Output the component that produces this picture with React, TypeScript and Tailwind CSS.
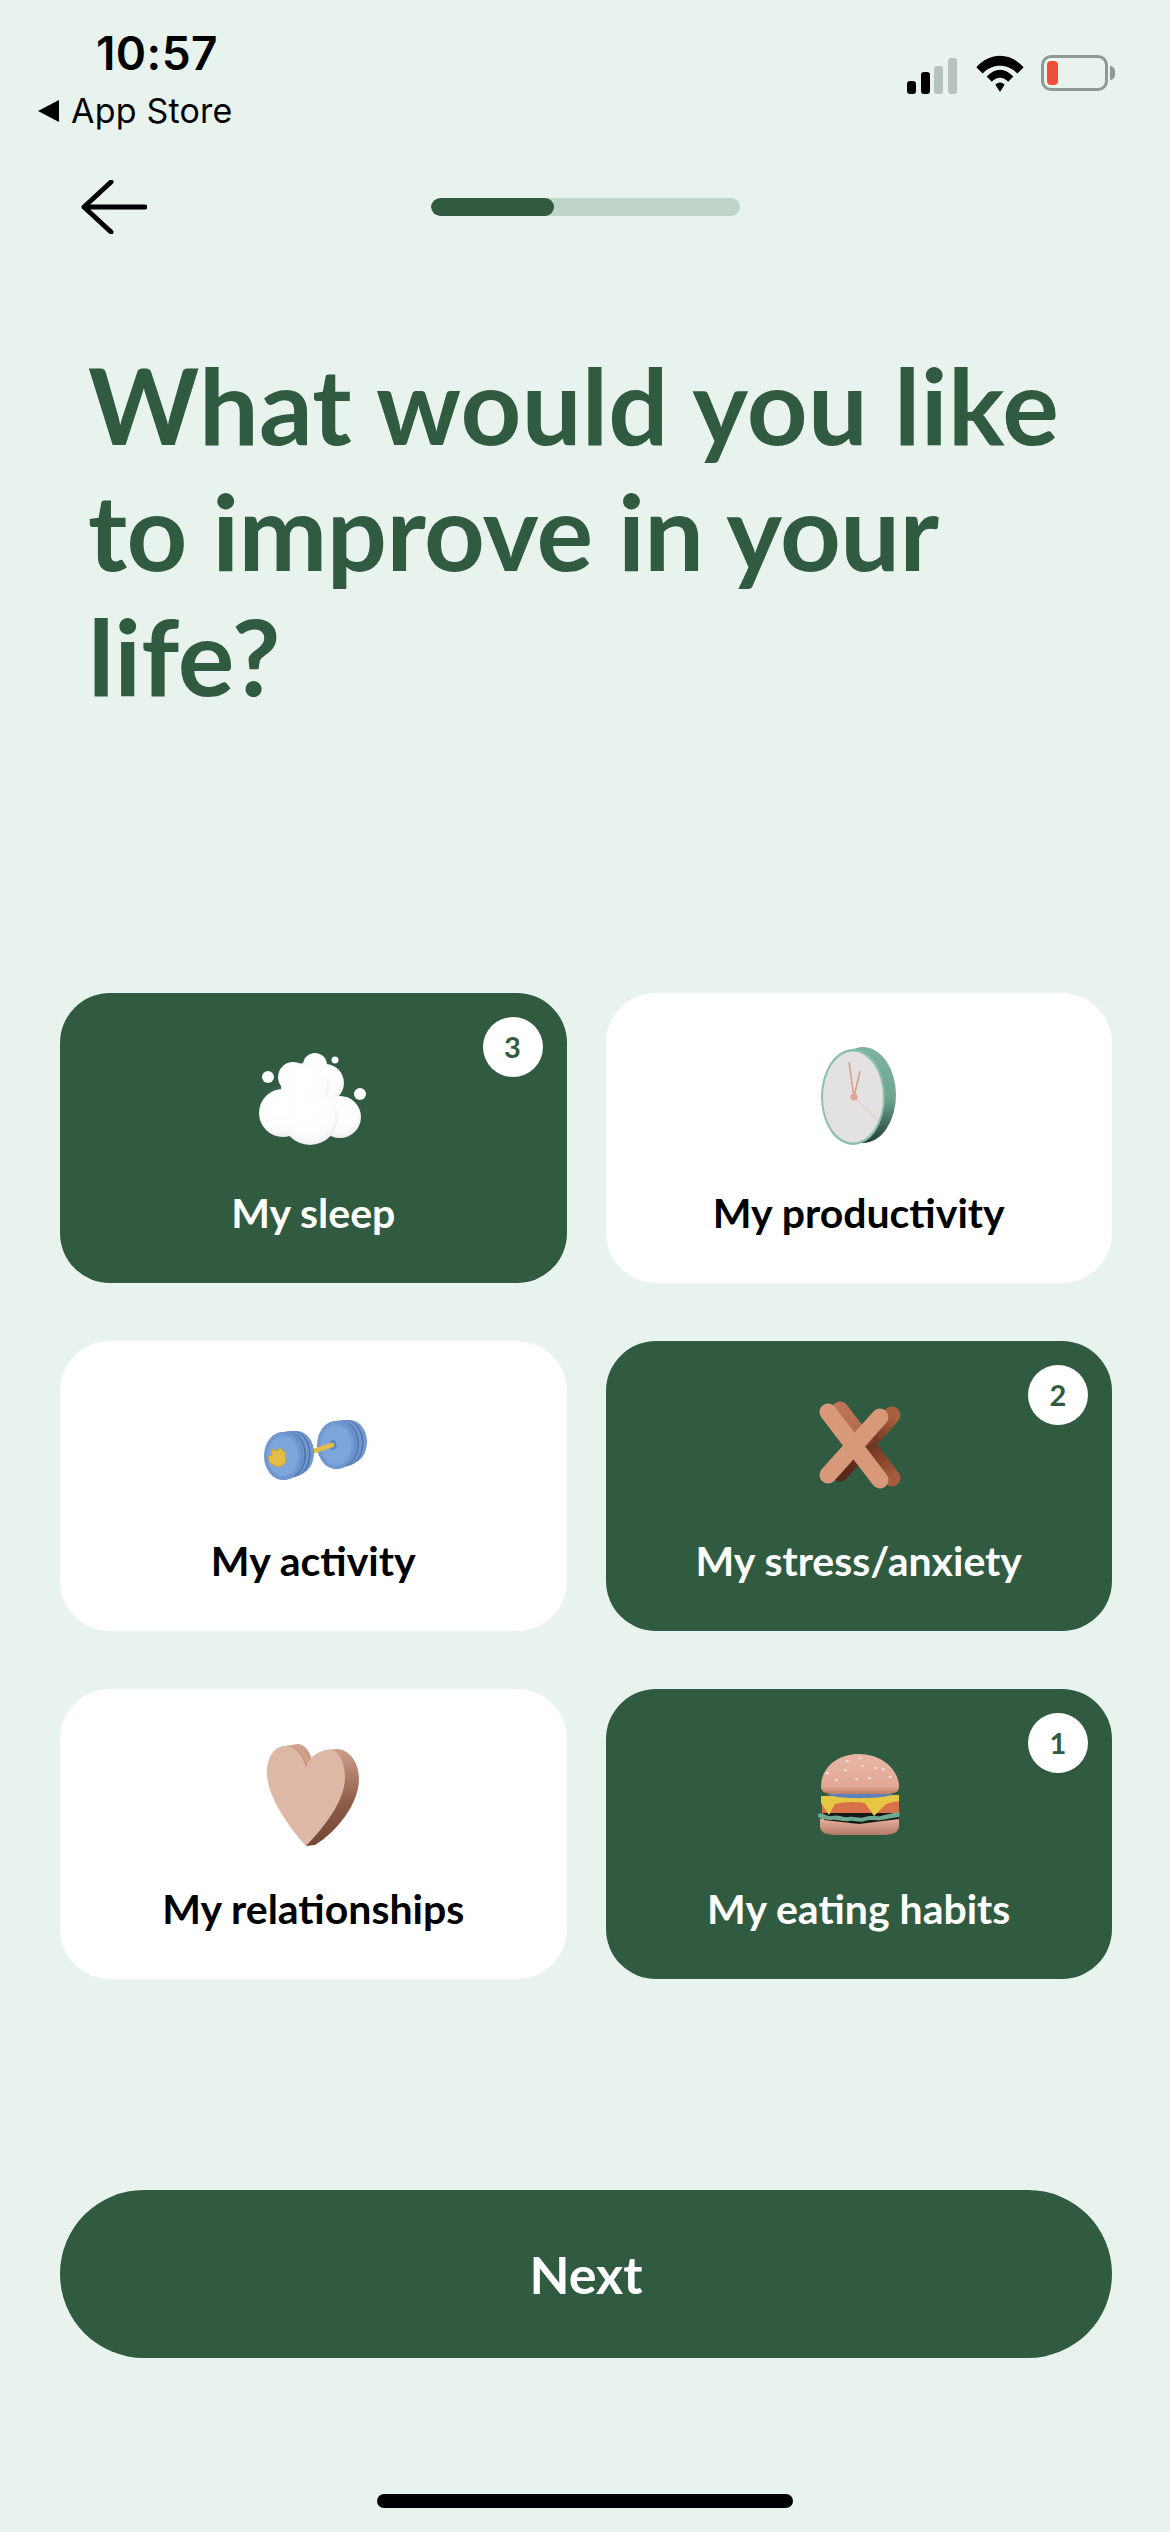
import React from 'react';

const sans = { fontFamily: 'Lato, "Noto Sans", sans-serif' };

function Cloud() {
  const blobs = [
    [40, 32, 15], [62, 20, 12], [72, 38, 19], [52, 42, 24],
    [87, 72, 21], [30, 68, 24], [57, 72, 28],
    [15, 32, 6], [82, 15, 3.5], [107, 49, 6],
  ];
  return (
    <svg width="120" height="108" viewBox="0 0 120 108">
      <defs>
        <radialGradient id="puff" cx="0.45" cy="0.4" r="0.68">
          <stop offset="0%" stopColor="#ffffff" />
          <stop offset="72%" stopColor="#fbfbfb" />
          <stop offset="100%" stopColor="#e2e2e2" />
        </radialGradient>
        <filter id="soft" x="-20%" y="-20%" width="140%" height="140%">
          <feGaussianBlur stdDeviation="5" />
        </filter>
      </defs>
      {blobs.map(([x, y, r], i) => (
        <circle key={i} cx={x} cy={y} r={r} fill="url(#puff)" />
      ))}
      <g filter="url(#soft)" opacity="0.75">
        <circle cx="52" cy="40" r="16" fill="#ffffff" />
        <circle cx="32" cy="64" r="15" fill="#ffffff" />
        <circle cx="58" cy="68" r="18" fill="#ffffff" />
      </g>
    </svg>
  );
}

function Clock() {
  return (
    <svg width="120" height="108" viewBox="0 0 120 108">
      <defs>
        <linearGradient id="rim" x1="0" y1="0" x2="0" y2="1">
          <stop offset="0%" stopColor="#7fb5a0" />
          <stop offset="55%" stopColor="#6fa48f" />
          <stop offset="100%" stopColor="#1f3d30" />
        </linearGradient>
      </defs>
      <ellipse cx="64" cy="50" rx="33" ry="48" fill="url(#rim)" />
      <ellipse cx="54" cy="52" rx="32" ry="48" fill="#8cc0ab" />
      <ellipse cx="54" cy="52" rx="30" ry="45.5" fill="#e3e1e3" />
      <path d="M55 52 L50 17" stroke="#dd9f85" strokeWidth="1.6" />
      <path d="M55 52 L61 26" stroke="#dd9f85" strokeWidth="1.6" />
      <path d="M55 52 L79 76" stroke="#ecc0ab" strokeWidth="1" />
      <circle cx="55" cy="52" r="3.6" fill="#e0a58c" />
    </svg>
  );
}

function Plates({ x, y }: { x: number; y: number }) {
  return (
    <g>
      <ellipse cx={x + 14} cy={y - 3} rx="17" ry="22" fill="#7199d0" />
      <ellipse cx={x + 10} cy={y - 2} rx="17.5" ry="23" fill="#4d71a8" />
      <ellipse cx={x + 8.5} cy={y - 2} rx="17.5" ry="23" fill="#7199d0" />
      <ellipse cx={x + 5} cy={y - 1} rx="18" ry="23.5" fill="#4d71a8" />
      <ellipse cx={x + 3.5} cy={y - 1} rx="18" ry="23.5" fill="#7199d0" />
      <ellipse cx={x + 0.8} cy={y} rx="19" ry="24" fill="#5a80b8" />
      <ellipse cx={x} cy={y} rx="19" ry="24" fill="#6f98d0" />
      <ellipse cx={x} cy={y} rx="15.5" ry="20" fill="#7ea5da" />
    </g>
  );
}

function Dumbbell() {
  return (
    <svg width="120" height="108" viewBox="0 0 120 108">
      <Plates x={83} y={52} />
      <ellipse cx="80" cy="52" rx="3.5" ry="5" fill="#5f85bd" />
      <path d="M58 59 L79 52" stroke="#e3bd45" strokeWidth="4.5" strokeLinecap="round" />
      <Plates x={30} y={63} />
      <path
        d="M15 64 L19 62 L19 56 L24 58 L27 55 L30 58 L33 60 L32 63 L33 68 L30 72 L25 74 L21 72 L17 70 Z"
        fill="#e3bd45"
        stroke="#cfa62c"
        strokeWidth="1"
      />
    </svg>
  );
}

function Cross() {
  return (
    <svg width="120" height="108" viewBox="0 0 120 108">
      <defs>
        <linearGradient id="crossA" gradientUnits="userSpaceOnUse" x1="41" y1="17" x2="93" y2="85">
          <stop offset="0%" stopColor="#bd7458" />
          <stop offset="40%" stopColor="#b06a4e" />
          <stop offset="55%" stopColor="#6e3421" />
          <stop offset="100%" stopColor="#a65a3e" />
        </linearGradient>
        <linearGradient id="crossB" gradientUnits="userSpaceOnUse" x1="93" y1="22" x2="41" y2="80">
          <stop offset="0%" stopColor="#a9603f" />
          <stop offset="45%" stopColor="#6b3320" />
          <stop offset="100%" stopColor="#55281a" />
        </linearGradient>
      </defs>
      <path d="M93 22 L41 80" stroke="url(#crossB)" strokeWidth="17" strokeLinecap="round" />
      <path d="M41 17 L93 85" stroke="url(#crossA)" strokeWidth="17" strokeLinecap="round" />
      <path d="M29 19 L81 87" stroke="#d8997b" strokeWidth="17" strokeLinecap="round" />
      <path d="M81 24 L29 82" stroke="#d8997b" strokeWidth="17" strokeLinecap="round" />
    </svg>
  );
}

function Heart() {
  return (
    <svg width="120" height="108" viewBox="0 0 120 108">
      <defs>
        <linearGradient id="heartBack" x1="0" y1="0" x2="0" y2="1">
          <stop offset="0%" stopColor="#d2a592" />
          <stop offset="60%" stopColor="#8d5a47" />
          <stop offset="100%" stopColor="#724636" />
        </linearGradient>
      </defs>
      <path
        d="M53 105 L62 104 C85 90 106 62 106 38 C106 20 95 8 84 8 L72 9 L60 22 C57 10 52 3 44 3 L32 5 Z"
        fill="url(#heartBack)"
      />
      <path d="M46 8 C50 10 57 16 60 24 L55 26 L49 14 Z" fill="#d99e88" />
      <path
        d="M53 105 C35 85 14 55 14 32 C14 15 22 5 32 5 C42 5 50 15 53 26 C57 15 66 9 77 9 C86 9 92 22 92 36 C92 60 72 85 53 105 Z"
        fill="#deb8a6"
      />
    </svg>
  );
}

function Burger() {
  const seeds = [[47, 19], [60, 16], [45, 28], [62, 24], [75, 26], [83, 27], [36, 38], [56, 37], [69, 36], [90, 35], [27, 31]];
  return (
    <svg width="120" height="108" viewBox="0 0 120 108">
      <defs>
        <linearGradient id="bun" x1="0" y1="0" x2="0" y2="1">
          <stop offset="0%" stopColor="#e8b6a6" />
          <stop offset="80%" stopColor="#e3a795" />
          <stop offset="100%" stopColor="#b97d68" />
        </linearGradient>
        <linearGradient id="bunLow" x1="0" y1="0" x2="0" y2="1">
          <stop offset="0%" stopColor="#e6ae9c" />
          <stop offset="100%" stopColor="#b27a66" />
        </linearGradient>
      </defs>
      <path d="M21 78 L100 78 L100 85 C100 92 92 94 84 94 L38 94 C28 94 21 92 21 85 Z" fill="url(#bunLow)" />
      <path d="M23 60 L100 60 L100 75 L23 75 Z" fill="#d9704a" />
      <path d="M24 72 L100 72 L100 78 L60 83 L25 79 Z" fill="#141a16" />
      <path
        d="M19 73 C24 71 28 76 33 75 C39 73 44 77 50 76 C56 75 60 78 66 76 C72 74 76 76 82 75 C88 73 94 72 101 71 L100 76 C92 77 88 78 82 79 C76 80 72 78 66 80 C60 82 56 79 50 80 C44 81 38 78 32 79 C27 79 22 78 19 76 Z"
        fill="#6fa892"
      />
      <path
        d="M22 55 L100 54 L100 60 C94 61 88 62 86 64 L75 75 L66 62 C56 60 44 61 36 63 L30 74 L22 62 Z"
        fill="#e6c744"
      />
      <path d="M28 53 L94 53 C90 58 36 59 28 53 Z" fill="#5f82bd" />
      <path
        d="M22 46 C22 25 40 13 60 13 C82 13 100 28 100 46 C100 51 96 52 90 53 L32 53 C25 52 22 50 22 46 Z"
        fill="url(#bun)"
      />
      {seeds.map(([x, y], i) => (
        <rect key={i} x={x} y={y} width="2.6" height="2" fill="#f3e6d4" />
      ))}
    </svg>
  );
}

interface Goal {
  label: string;
  art: React.ReactNode;
  rank?: number;
}

const goals: Goal[] = [
  { label: 'My sleep', art: <Cloud />, rank: 3 },
  { label: 'My productivity', art: <Clock /> },
  { label: 'My activity', art: <Dumbbell /> },
  { label: 'My stress/anxiety', art: <Cross />, rank: 2 },
  { label: 'My relationships', art: <Heart /> },
  { label: 'My eating habits', art: <Burger />, rank: 1 },
];

function GoalCard({ label, art, rank }: Goal) {
  const picked = rank !== undefined;
  return (
    <div
      className={`relative h-[290px] rounded-[50px] flex flex-col items-center pt-[52px] ${
        picked ? 'bg-[#305b41] text-white' : 'bg-white text-black'
      }`}
    >
      <div className="w-[120px] h-[108px]">{art}</div>
      <div className="mt-[35px] text-[41px] leading-[50px] font-bold">{label}</div>
      {picked && (
        <div className="absolute top-[24px] right-[24px] w-[60px] h-[60px] rounded-full bg-white flex items-center justify-center text-[#305b41] text-[29px] font-bold">
          {rank}
        </div>
      )}
    </div>
  );
}

export default function App() {
  return (
    <div className="w-[1170px] h-[2532px] bg-[#e9f3ee] flex flex-col" style={sans}>
      <div className="h-[180px] flex justify-between">
        <div className="pl-[37px] pt-[26px] font-['Inter',sans-serif] text-black">
          <div className="pl-[59px] text-[46px] leading-[54px] font-semibold tracking-[0.4px]">10:57</div>
          <div className="mt-[11px] flex items-center gap-[11px]">
            <svg width="23" height="24" viewBox="0 0 23 24">
              <path d="M22 1 L22 23 L1 12 Z" fill="#000" />
            </svg>
            <span className="text-[34px] leading-[40px] font-normal tracking-[0.2px]">App Store</span>
          </div>
        </div>
        <div className="pr-[55px] pt-[55px] flex items-start">
          <svg width="50" height="37" viewBox="0 0 50 37" className="mt-[2px]">
            <rect x="0" y="24" width="9" height="13" rx="3" fill="#000" />
            <rect x="14" y="15" width="9" height="22" rx="3" fill="#000" />
            <rect x="27" y="9" width="9" height="28" rx="3" fill="#b9c3bd" />
            <rect x="41" y="1" width="9" height="36" rx="3" fill="#b9c3bd" />
          </svg>
          <svg width="50" height="37" viewBox="0 0 48 36" className="ml-[18px]">
            <path d="M1 12 C14 -3 34 -3 47 12 L41 18 C31 8 17 8 7 18 Z" fill="#000" />
            <path d="M11 21 C19 12 29 12 37 21 L32 26 C27 21 21 21 16 26 Z" fill="#000" />
            <path d="M19.5 29 C22 26 26 26 28.5 29 L24 36 Z" fill="#000" />
          </svg>
          <div className="ml-[16px] w-[67px] h-[36px] rounded-[10px] border-[3px] border-[#8f9994] p-[3px]">
            <div className="w-[11px] h-full rounded-[4px] bg-[#ef4e3a]" />
          </div>
          <div className="ml-[2px] mt-[11px] w-[5px] h-[14px] rounded-r-full bg-[#8f9994]" />
        </div>
      </div>

      <div className="grid grid-cols-[1fr_309px_1fr] items-center h-[54px] px-[81px]">
        <svg width="66" height="54" viewBox="0 0 66 54" fill="none">
          <path
            d="M64 27 H3 M30 2 L3 27 L30 52"
            stroke="#000"
            strokeWidth="5"
            strokeLinecap="round"
            strokeLinejoin="round"
          />
        </svg>
        <div className="h-[18px] rounded-full bg-[#c0d5c9] overflow-hidden">
          <div className="w-[123px] h-full rounded-full bg-[#305b41]" />
        </div>
      </div>

      <h1 className="mt-[108px] ml-[88px] text-[#305b41] text-[106px] leading-[125.5px] font-bold">
        <span className="block tracking-[0.3px]">What would you like</span>
        <span className="block tracking-[-0.5px]">to improve in your</span>
        <span className="block">life?</span>
      </h1>

      <div className="mt-[274px] pl-[60px] pr-[58px] grid grid-cols-2 gap-x-[39px] gap-y-[58px]">
        {goals.map((goal) => (
          <GoalCard key={goal.label} {...goal} />
        ))}
      </div>

      <div className="mt-[211px] ml-[60px] mr-[58px] h-[168px] rounded-full bg-[#305b41] flex items-center justify-center text-white text-[52px] font-bold">
        Next
      </div>

      <div className="mt-[136px] self-center w-[416px] h-[14px] rounded-full bg-black" />
    </div>
  );
}
